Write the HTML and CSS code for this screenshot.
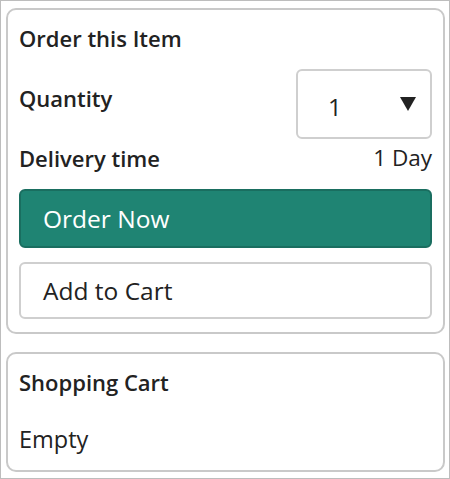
FILE: index.html
```html
<!DOCTYPE html>
<html>
<head>
<meta charset="utf-8">
<link rel="stylesheet" href="styles.css">
</head>
<body>
<div class="frame">
  <section class="card order">
    <h2 class="title">Order this Item</h2>
    <div class="row qty-row">
      <span class="label qty-label">Quantity</span>
      <div class="select">
        <span class="select-value">1</span>
        <svg class="caret" width="16" height="14" viewBox="0 0 16 14"><path d="M0 0H16L8 14Z" fill="#222"/></svg>
      </div>
    </div>
    <div class="row delivery-row">
      <span class="label">Delivery time</span>
      <span class="value">1 Day</span>
    </div>
    <button class="btn btn-primary">Order Now</button>
    <button class="btn btn-secondary">Add to Cart</button>
  </section>
  <section class="card cart">
    <h2 class="title">Shopping Cart</h2>
    <p class="empty">Empty</p>
  </section>
</div>
</body>
</html>
```
FILE: styles.css
```css
* { box-sizing: border-box; }
html, body { margin: 0; padding: 0; background: #fff; }
body {
  font-family: "Open Sans", Lato, "Liberation Sans", sans-serif;
  color: #222;
}
.frame {
  width: 450px;
  height: 479px;
  border: 1px solid #bdbdbd;
  padding: 7px 4px 0 5px;
  display: flex;
  flex-direction: column;
}
.card {
  border: 2px solid #c9c9c9;
  border-radius: 10px;
  padding: 10px 11px 13px 11px;
  display: flex;
  flex-direction: column;
}
.cart {
  margin-top: 18px;
  height: 120px;
}
.title {
  margin: 0;
  font-size: 22px;
  font-weight: 600;
  line-height: 36px;
}
.row {
  display: flex;
  justify-content: space-between;
  align-items: center;
}
.qty-row {
  margin-top: 13px;
  height: 70px;
}
.label {
  font-size: 22px;
  font-weight: 600;
  line-height: 28px;
}
.qty-label { padding-bottom: 12px; }
.select {
  width: 136px;
  height: 70px;
  border: 2px solid #cfcfcf;
  border-radius: 6px;
  display: flex;
  align-items: center;
  justify-content: space-between;
  padding: 0 14px 0 30px;
}
.select-value {
  font-size: 24px;
  line-height: 28px;
  padding-top: 5px;
}
.delivery-row {
  margin-top: 5px;
  line-height: 28px;
  height: 28px;
}
.value { font-size: 22.5px; }
.btn {
  display: block;
  width: 100%;
  text-align: left;
  font-family: inherit;
  font-size: 24.5px;
  line-height: 30px;
  border-radius: 6px;
  padding: 0 0 0 22px;
  cursor: pointer;
}
.btn-primary {
  margin-top: 17px;
  height: 59px;
  background: #1f8473;
  border: 2px solid #1a6e60;
  color: #fff;
}
.btn-secondary {
  margin-top: 14px;
  height: 57px;
  background: #fff;
  border: 2px solid #cfcfcf;
  color: #222;
}
.empty {
  margin: 0;
  margin-top: 24px;
  font-size: 23.5px;
  line-height: 30px;
}
```
